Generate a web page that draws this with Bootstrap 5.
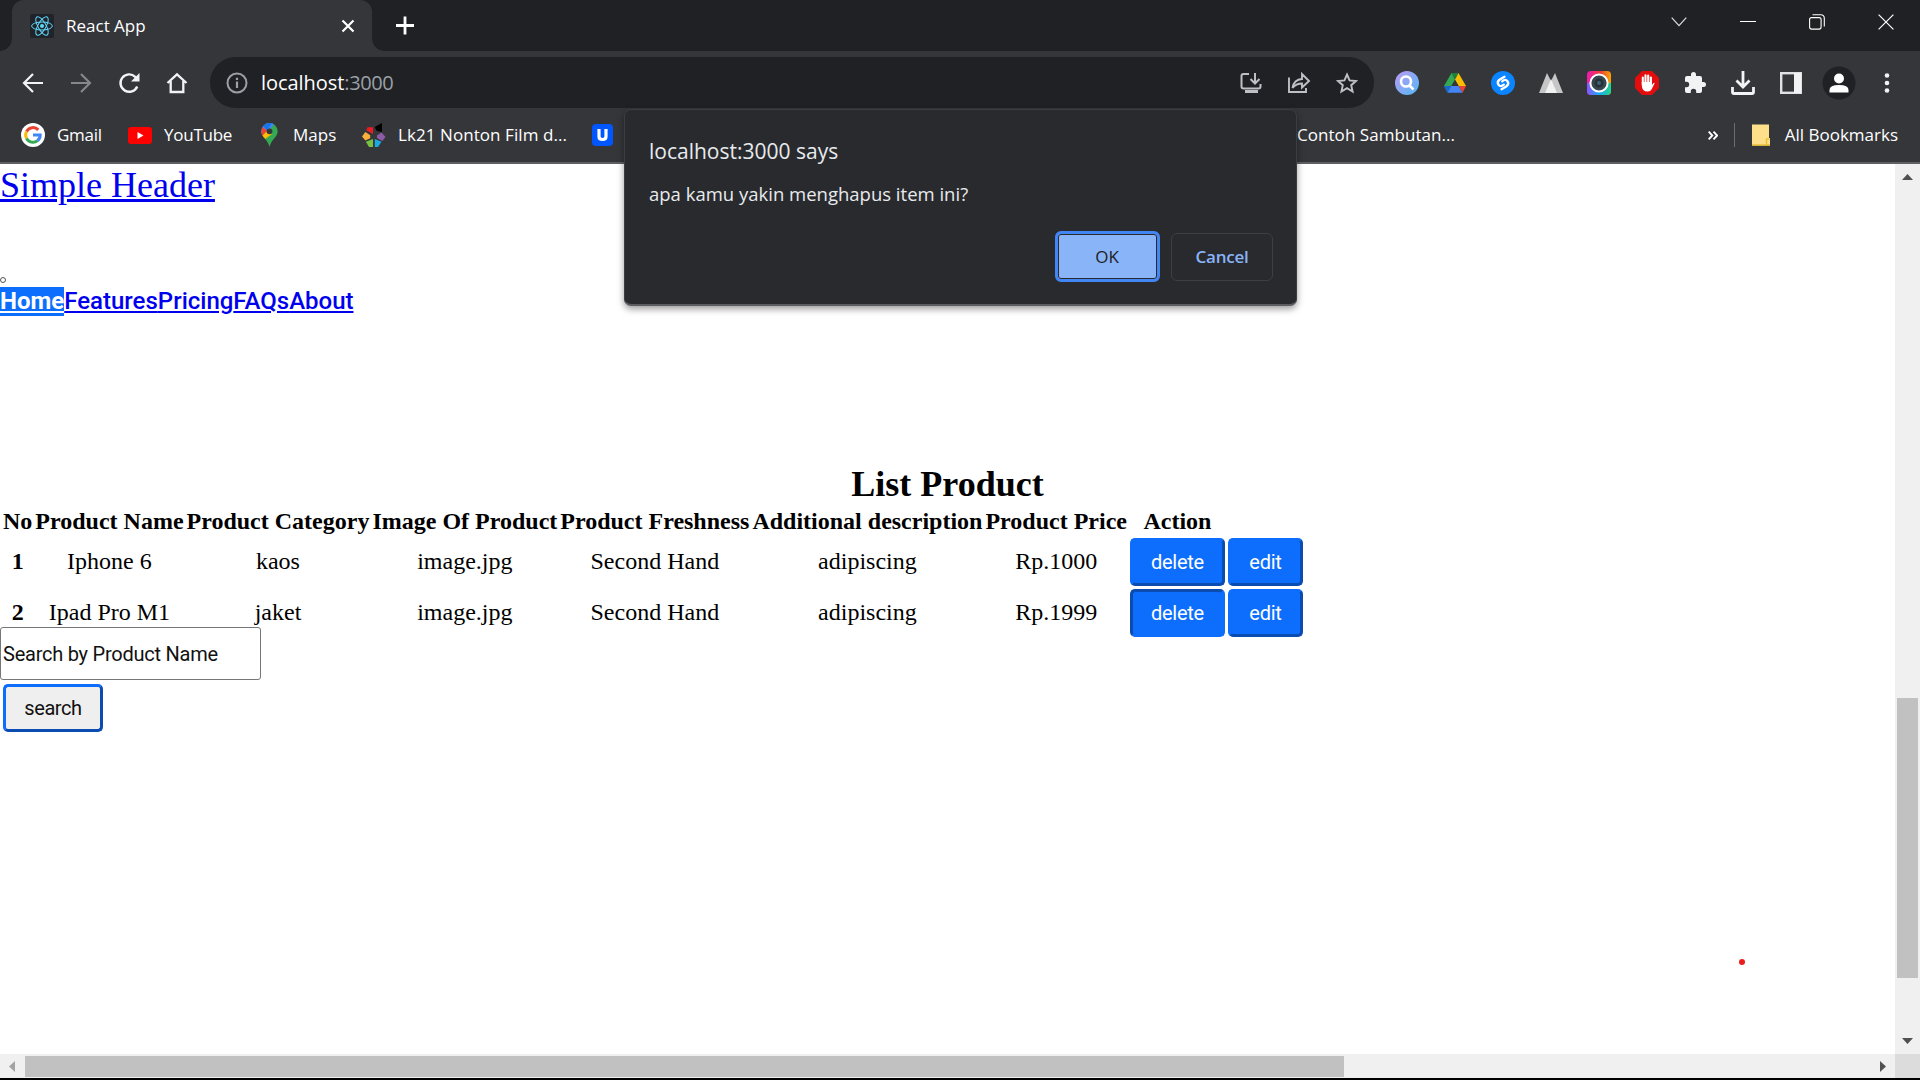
<!DOCTYPE html>
<html lang="id">
<head>
<meta charset="utf-8">
<title>React App</title>
<link href="https://cdn.jsdelivr.net/npm/bootstrap@5.3.0/dist/css/bootstrap.min.css" rel="stylesheet">
<style>
body{width:1920px;height:1080px;overflow:hidden;background:#fff;color:#000;font-family:"Open Sans","Noto Sans",sans-serif}
svg{display:block;flex:none}
.tabstrip{height:51px;background:#202124;padding-left:12px}
.tab-active{width:360px;background:#35363a;border-radius:12px 12px 0 0;position:relative;color:#fff;padding:0 17px 0 18px}
.tab-active::before,.tab-active::after{content:"";position:absolute;bottom:0;width:12px;height:12px}
.tab-active::before{left:-12px;background:radial-gradient(circle at 0 0,transparent 11.5px,#35363a 12px)}
.tab-active::after{right:-12px;background:radial-gradient(circle at 100% 0,transparent 11.5px,#35363a 12px)}
.ui{font-size:17px;line-height:24px;white-space:nowrap}
.wincell{width:69px;height:43px}
.toolbar{height:63px;background:#35363a;padding-left:9px}
.cell{width:48px;flex:none}
.omni{width:1164px;height:51px;background:#202124;border-radius:26px;margin-left:9px;padding:0 3px 0 16px;color:#fff}
.addr{font-size:20px;margin-left:13px;letter-spacing:-.05px}
.port{color:#9aa0a6;letter-spacing:-.4px}
.extensions{margin-left:9px}
.bookmarks{height:50px;background:#35363a;border-bottom:2px solid #5f6063;color:#fff;padding-left:21px;padding-bottom:6px}
.tight{letter-spacing:-.25px}
.bm-gmail{width:71px;margin-left:12px}
.bm-youtube{width:97px;margin-left:12px}
.bm-maps{width:69px;margin-left:15px}
.bm-film{width:194px;margin-left:12px;letter-spacing:.07px}
.bm-speech{margin-left:684px;letter-spacing:.05px}
.bm-sep{width:1px;height:24px;background:#6b6c6f;margin:0 17px 0 16px}
.bm-all{margin-left:15px}
.bm-right{margin-right:22px}
.viewport{width:1895px;height:890px;position:relative;overflow:hidden;font-family:"Liberation Serif",serif}
.lnk{color:#0000ee;text-decoration:underline;display:inline-block}
.brandline{font-size:36px;line-height:41px;padding-top:1px;height:110px}
.bullet{width:6px;height:6px;border:1px solid #555;border-radius:50%;margin-top:3px}
.navline{font-family:Roboto,sans-serif;font-size:24px;font-weight:500;line-height:29px;height:176px;margin-top:4px}
.navline .current{background:#0d6efd;color:#fff;font-weight:700}
.ttl{font-size:36px;line-height:42px;font-weight:700;margin:0}
.products{border-collapse:separate;border-spacing:3px;font-size:24px;line-height:27px;text-align:center}
.products td,.products th{padding:0;white-space:nowrap}
.products thead th{height:27px}
.products tbody th,.products tbody td:not(.btncell){padding-bottom:2px}
.act{font-family:Roboto,sans-serif;font-size:20px;line-height:24px;height:48px;border-radius:5px;border:3px solid;border-color:#0d6efd #0a4cb0 #0a4cb0 #0d6efd;background:#0d6efd;color:#fff;padding:0;display:block;letter-spacing:-.27px}
.act.pressed{border-color:#0a4cb0 #0d6efd #0d6efd #0a4cb0}
.w-del{width:95px}.w-edit{width:75px}
.searchbox{margin-top:-13px}
.srch{width:261px;height:53px;border:1px solid #767676;border-radius:3px;font-family:Roboto,sans-serif;font-size:20px;letter-spacing:-.24px;padding:0 0 0 2px;color:#111;display:block;position:relative;background:#fff}
.srch::placeholder{color:#111;opacity:1}
.act.plain{background:#efefef;color:#111;width:100px;margin:4px 0 0 3px;letter-spacing:-.4px}
.vbar{width:25px;height:890px;background:#f0f0f0;padding:10px 0}
.vthumb{width:21px;height:280px;background:#c1c1c1;margin:518px 2px 60px}
.hbar{height:24px;background:#f0f0f0;padding-left:9px}
.hthumb{width:1319px;height:21px;background:#c1c1c1;margin-left:10px}
.corner{width:25px;height:24px;background:#dcdcdc;margin-left:9px}
.base{height:2px;background:#000}
.dialogbox{position:absolute;left:624px;top:109px;width:673px;height:197px;background:#292a2d;border:1px solid #3c3d40;border-bottom:2px solid #5c5d60;border-radius:7px;box-shadow:0 3px 7px rgba(0,0,0,.4);color:#e8eaed;padding:29px 23px 22px 24px}
.dlg-title{font-size:21px}
.dlg-text{font-size:18.5px;margin-top:19px}
.dlg-actions{gap:11px}
.dlgbtn{font-size:17px;font-weight:600;border-radius:6px}
.ok{width:105px;height:51px;border:3px solid #4285f4;background:#8ab4f8;box-shadow:inset 0 0 0 1px #292a2d;color:#202124;font-weight:500;padding-right:1px}
.cancel{width:102px;height:48px;border:1px solid #3c4043;color:#8ab4f8}
.dot{position:absolute;left:1738.5px;top:794.5px;width:6px;height:6px;border-radius:50%;background:#ea1c1c}
</style>
<script src="https://cdn.jsdelivr.net/npm/bootstrap@5.3.0/dist/js/bootstrap.bundle.min.js"></script>
</head>
<body>
<div class="tabstrip d-flex">
  <div class="tab-active d-flex align-items-center">
    <svg width="24" height="24" viewBox="0 0 24 24"><rect width="24" height="24" rx="2" fill="#20232a"/><g fill="none" stroke="#61dafb" stroke-width="1"><ellipse cx="12" cy="12" rx="10.4" ry="4"/><ellipse cx="12" cy="12" rx="10.4" ry="4" transform="rotate(60 12 12)"/><ellipse cx="12" cy="12" rx="10.4" ry="4" transform="rotate(120 12 12)"/></g><circle cx="12" cy="12" r="2" fill="#61dafb"/></svg>
    <span class="ui ms-2 ps-1 flex-grow-1">React App</span>
    <svg width="14" height="14" viewBox="0 0 14 14"><path d="M1.5 1.5l11 11M12.500 1.500l-11 11" stroke="#fff" stroke-width="2.200"/></svg>
  </div>
  <svg class="ms-4 mt-3" width="18" height="19" viewBox="0 0 18 19"><path d="M9 .5v18M0 9.500h18" stroke="#fff" stroke-width="2.800"/></svg>
  <div class="d-flex ms-auto">
    <div class="wincell d-flex align-items-center justify-content-center"><svg width="16" height="10" viewBox="0 0 16 10"><path d="M.7.700L8 8.700 15.300.700" fill="none" stroke="#ddd" stroke-width="1.200"/></svg></div>
    <div class="wincell d-flex align-items-center justify-content-center"><svg width="16" height="1" viewBox="0 0 16 1"><path d="M0 .5h16" stroke="#fff" stroke-width="1"/></svg></div>
    <div class="wincell d-flex align-items-center justify-content-center"><svg width="16" height="16" viewBox="0 0 16 16" fill="none" stroke="#fff" stroke-width="1.100"><rect x=".6" y="3.600" width="11.500" height="11.500" rx="2"/><path d="M3.500.700H12A3.300 3.300 0 0 1 15.300 4v8.500"/></svg></div>
    <div class="wincell d-flex align-items-center justify-content-center"><svg width="16" height="16" viewBox="0 0 16 16"><path d="M.6.600l14.800 14.800M15.400.600L.6 15.400" stroke="#fff" stroke-width="1.200"/></svg></div>
  </div>
</div>
<div class="toolbar d-flex align-items-center">
  <div class="cell d-flex justify-content-center"><svg width="22" height="22" viewBox="0 0 22 22" fill="none" stroke="#f1f3f4" stroke-width="2.200"><path d="M21 11H2.500M11 2L2 11l9 9"/></svg></div>
  <div class="cell d-flex justify-content-center"><svg width="22" height="22" viewBox="0 0 22 22" fill="none" stroke="#85878a" stroke-width="2.200"><path d="M1 11h18.500M11 2l9 9-9 9"/></svg></div>
  <div class="cell d-flex justify-content-center"><svg width="22" height="22" viewBox="0 0 22 22"><path d="M19.200 14.500A8.700 8.700 0 1 1 17.200 4.800L19.500 7" fill="none" stroke="#f1f3f4" stroke-width="2.400"/><path d="M21.500 1v8.500H13z" fill="#f1f3f4"/></svg></div>
  <div class="cell d-flex justify-content-center"><svg width="22" height="22" viewBox="0 0 22 22" fill="none" stroke="#f1f3f4" stroke-width="2.300"><path d="M1.500 11L11 2.300 20.500 11M4.700 9v11h12.600V9"/></svg></div>
  <div class="omni d-flex align-items-center">
    <svg width="22" height="22" viewBox="0 0 22 22"><circle cx="11" cy="11" r="9.500" fill="none" stroke="#9aa0a6" stroke-width="2"/><path d="M11 9.500V16M11 5.800V8" stroke="#9aa0a6" stroke-width="2.200"/></svg>
    <span class="addr flex-grow-1">localhost<span class="port">:3000</span></span>
    <div class="cell d-flex justify-content-center"><svg width="22" height="22" viewBox="0 0 22 22"><path d="M9 2H3.500Q1.500 2 1.500 4v10.500q0 2 2 2h15q2 0 2-2V12M15 1v9.500M10.500 7l4.500 4.500L19.500 7" fill="none" stroke="#bdc1c6" stroke-width="2"/><path d="M5 18h13v3H5z" fill="#bdc1c6"/></svg></div>
    <div class="cell d-flex justify-content-center"><svg width="24" height="22" viewBox="0 0 24 22" fill="none" stroke="#bdc1c6" stroke-width="1.900"><path d="M2 5.500V20h17v-4M5.500 16C6.500 10 10 7.300 15 7V2l7 7-7 6.500V11.500C11 11.500 8 12.800 5.500 16z"/></svg></div>
    <div class="cell d-flex justify-content-center"><svg width="22" height="22" viewBox="0 0 22 22"><path d="M11 2.500l2.600 5.900 6.400.6-4.800 4.200 1.400 6.300L11 16.200l-5.600 3.300 1.400-6.300L2 9l6.400-.6z" fill="none" stroke="#bdc1c6" stroke-width="1.900"/></svg></div>
  </div>
  <div class="extensions d-flex align-items-center">
    <div class="cell d-flex justify-content-center"><svg width="24" height="24" viewBox="0 0 24 24"><defs><linearGradient id="lens" x1="0" y1="0" x2="1" y2="1"><stop offset=".1" stop-color="#b39df5"/><stop offset="1" stop-color="#4fb8f5"/></linearGradient></defs><circle cx="12" cy="12" r="12" fill="url(#lens)"/><circle cx="11" cy="10.500" r="5" fill="none" stroke="#fff" stroke-width="2.600"/><path d="M14.500 14.500l4 4" stroke="#fff" stroke-width="2.600"/></svg></div>
    <div class="cell d-flex justify-content-center"><svg width="22" height="20" viewBox="0 0 22 20"><path d="M7.500 0h7L11 6.200z" fill="#188038"/><path d="M7.500 0L0 13l3.500 6.500L11 6.500z" fill="#34a853"/><path d="M14.500 0L22 13h-7.200L11 6.500z" fill="#fbbc04"/><path d="M0 13h7.300l-3.800 6.700z" fill="#1967d2"/><path d="M7.300 13h7.500l3.700 6.700h-15z" fill="#4285f4"/><path d="M14.800 13H22l-3.500 6.700z" fill="#ea4335"/><path d="M11 7.500l3.300 5.500H7.700z" fill="#35363a"/></svg></div>
    <div class="cell d-flex justify-content-center"><svg width="24" height="24" viewBox="0 0 24 24"><circle cx="12" cy="12" r="12" fill="#0a84ff"/><path d="M13.500 5.800L8.800 8.500Q5.500 11 7.500 13.700T12.800 13.600M10.500 18.200l4.700-2.700Q18.500 13 16.500 10.300T11.200 10.400" fill="none" stroke="#fff" stroke-width="2.300" stroke-linecap="round"/></svg></div>
    <div class="cell d-flex justify-content-center"><svg width="24" height="20" viewBox="0 0 24 20"><path d="M0 20L8 0l4 8 4-8 8 20z" fill="#c6c6c6"/><path d="M6 20l6-14 6 14z" fill="#f1f1f1"/></svg></div>
    <div class="cell d-flex justify-content-center"><svg width="24" height="24" viewBox="0 0 24 24"><defs><linearGradient id="cam" x1="0" y1="0" x2="1" y2="0"><stop stop-color="#ec1bb5"/><stop offset=".55" stop-color="#f13b38"/><stop offset="1" stop-color="#f9a602"/></linearGradient><linearGradient id="cam2" x1="0" y1="0" x2="1" y2="0"><stop stop-color="#8c54ff"/><stop offset=".5" stop-color="#19a8f5"/><stop offset="1" stop-color="#21d789"/></linearGradient></defs><rect width="24" height="24" rx="4" fill="url(#cam)"/><path d="M0 12h24v8a4 4 0 0 1-4 4H4a4 4 0 0 1-4-4z" fill="url(#cam2)"/><circle cx="12" cy="12" r="8.600" fill="#37474f" stroke="#fff" stroke-width="2"/><circle cx="12" cy="12" r="4.500" fill="#263238"/><circle cx="12" cy="12" r="2" fill="#3d6478"/></svg></div>
    <div class="cell d-flex justify-content-center"><svg width="24" height="24" viewBox="0 0 24 24"><path d="M7 0h10l7 7v10l-7 7H7l-7-7V7z" fill="#e40d0d"/><path d="M7.800 13V6.500M10.500 12V4.200M13.200 12V4.500M15.900 13V6.500" stroke="#fff" stroke-width="2.100" stroke-linecap="round"/><path d="M6.800 11h10.100v3l1.600-2q1.200-.5 1 .6L16.800 18q-1.300 2.500-4 2.500-6 0-6-6z" fill="#fff"/></svg></div>
    <div class="cell d-flex justify-content-center"><svg width="24" height="24" viewBox="0 0 24 24"><path d="M20.500 11H19V7a2 2 0 0 0-2-2h-4V3.500a2.500 2.500 0 0 0-5 0V5H4a2 2 0 0 0-2 2v3.800h1.500a2.700 2.700 0 0 1 0 5.400H2V20a2 2 0 0 0 2 2h3.800v-1.500a2.700 2.700 0 0 1 5.400 0V22H17a2 2 0 0 0 2-2v-4h1.500a2.500 2.500 0 0 0 0-5z" fill="#f1f3f4"/></svg></div>
    <div class="cell d-flex justify-content-center"><svg width="24" height="24" viewBox="0 0 24 24"><path d="M12 0v15M5.500 9.500L12 16l6.500-6.500M1.500 16v5q0 1.500 1.500 1.500h18q1.500 0 1.500-1.500v-5" fill="none" stroke="#f1f3f4" stroke-width="2.800"/></svg></div>
    <div class="cell d-flex justify-content-center"><svg width="22" height="22" viewBox="0 0 22 22"><rect x="1.200" y="1.200" width="19.600" height="19.600" fill="none" stroke="#dfe1e3" stroke-width="2.400"/><path d="M14 1h7v20h-7z" fill="#f1f3f4"/></svg></div>
    <div class="cell d-flex justify-content-center"><svg width="34" height="34" viewBox="0 0 34 34"><circle cx="17" cy="17" r="16.500" fill="#202124"/><circle cx="17" cy="12.500" r="5" fill="#fff"/><path d="M7.500 26.500V24q0-5 9.500-5t9.500 5v2.500z" fill="#fff"/></svg></div>
    <div class="cell d-flex justify-content-center"><svg width="6" height="20" viewBox="0 0 6 20" fill="#f1f3f4"><circle cx="3" cy="2.500" r="2.300"/><circle cx="3" cy="10" r="2.300"/><circle cx="3" cy="17.500" r="2.300"/></svg></div>
  </div>
</div>
<div class="bookmarks d-flex align-items-center ui">
  <svg width="24" height="24" viewBox="0 0 24 24"><circle cx="12" cy="12" r="12" fill="#fff"/><g fill="none" stroke-width="3"><path d="M17.300 6.900A7.300 7.300 0 0 0 5.500 8.600" stroke="#ea4335"/><path d="M5.500 8.600a7.300 7.300 0 0 0 0 6.800" stroke="#fbbc04"/><path d="M5.500 15.400a7.300 7.300 0 0 0 11 2.300" stroke="#34a853"/><path d="M16.500 17.700Q19.300 15.500 19.200 12H12" stroke="#4285f4"/></g></svg>
  <span class="bm-gmail tight">Gmail</span>
  <svg width="24" height="17" viewBox="0 0 24 17"><rect width="24" height="17" rx="3" fill="#f00"/><path d="M9.500 5v7l6-3.500z" fill="#fff"/></svg>
  <span class="bm-youtube tight">YouTube</span>
  <svg width="17" height="24" viewBox="0 0 17 24"><defs><clipPath id="pin"><path d="M8.500 0A8.200 8.200 0 0 1 16.700 8.200C16.700 14 10.500 16 8.500 24 6.500 16 .3 14 .3 8.200A8.200 8.200 0 0 1 8.500 0z"/></clipPath></defs><g clip-path="url(#pin)"><path d="M0 0h17v24H0z" fill="#34a853"/><path d="M0 16L17-3V-5H0z" fill="#4285f4"/><path d="M0 3l8 6-8 9z" fill="#ea4335"/><path d="M0 19V14L6 8l5 3z" fill="#fbbc04"/><path d="M2 3l4 4 5-7H4z" fill="#1a73e8"/></g><circle cx="8.500" cy="8.300" r="2.900" fill="#35363a"/></svg>
  <span class="bm-maps">Maps</span>
  <svg width="24" height="24" viewBox="0 0 24 24"><path d="M12.800 4L20 0v9l-5.500-1.200z" fill="#000"/><path d="M5.500 4.300H11v6.700L4.300 7.300z" fill="#ed1c24"/><path d="M3.400 9l4.800 3.200v3L3.400 17.500 0 13.500z" fill="#fbb03b"/><path d="M3.800 18.800L11 16v8H7z" fill="#7ac143"/><path d="M12.800 16l6.700 2.800L16 24h-3.200z" fill="#1ba9e1"/><path d="M19.500 9.500L23.500 14l-3.200 4-5.300-3v-2.500z" fill="#8e5ba6"/></svg>
  <span class="bm-film">Lk21 Nonton Film d...</span>
  <svg width="21" height="22" viewBox="0 0 21 22"><rect width="21" height="22" rx="4" fill="#0057ff"/><path d="M7 5v7.500q0 3 3.500 3t3.500-3V5" fill="none" stroke="#fff" stroke-width="3.200"/></svg>
  <span class="bm-speech">Contoh Sambutan...</span>
  <span class="bm-right d-flex align-items-center ms-auto">
    <svg width="10" height="9" viewBox="0 0 10 9"><path d="M.7.700l3.600 3.800L.7 8.300M5.500.700l3.600 3.800-3.600 3.800" fill="none" stroke="#fff" stroke-width="1.900"/></svg>
    <span class="bm-sep"></span>
    <svg width="18" height="22" viewBox="0 0 18 22"><path d="M0 .5h17V14h1v7.500H0z" fill="#ffe08a"/><path d="M0 21h18M14.500 21v-6h3" fill="none" stroke="#e9be3a" stroke-width="1.500"/></svg>
    <span class="bm-all">All Bookmarks</span>
  </span>
</div>
<div class="d-flex">
  <main class="viewport">
    <div class="brandline"><a class="lnk">Simple Header</a></div>
    <div class="bullet"></div>
    <nav class="navline d-flex align-items-start"><a class="lnk current">Home</a><a class="lnk">Features</a><a class="lnk">Pricing</a><a class="lnk">FAQs</a><a class="lnk">About</a></nav>
    <h2 class="ttl text-center">List Product</h2>
    <table class="products">
      <thead><tr><th>No</th><th>Product Name</th><th>Product Category</th><th>Image Of Product</th><th>Product Freshness</th><th>Additional description</th><th>Product Price</th><th>Action</th><th></th></tr></thead>
      <tbody>
        <tr><th>1</th><td>Iphone 6</td><td>kaos</td><td>image.jpg</td><td>Second Hand</td><td>adipiscing</td><td>Rp.1000</td><td class="btncell"><button class="act w-del">delete</button></td><td class="btncell"><button class="act w-edit">edit</button></td></tr>
        <tr><th>2</th><td>Ipad Pro M1</td><td>jaket</td><td>image.jpg</td><td>Second Hand</td><td>adipiscing</td><td>Rp.1999</td><td class="btncell"><button class="act w-del pressed">delete</button></td><td class="btncell"><button class="act w-edit">edit</button></td></tr>
      </tbody>
    </table>
    <div class="searchbox">
      <input class="srch" placeholder="Search by Product Name">
      <button class="act plain">search</button>
    </div>
    <div class="dot"></div>
  </main>
  <div class="vbar d-flex flex-column align-items-center">
    <svg width="11" height="6" viewBox="0 0 11 6"><path d="M0 6L5.500 0 11 6z" fill="#505050"/></svg>
    <div class="vthumb"></div>
    <svg width="11" height="6" viewBox="0 0 11 6"><path d="M0 0h11L5.500 6z" fill="#505050"/></svg>
  </div>
</div>
<div class="hbar d-flex align-items-center">
  <svg width="6" height="11" viewBox="0 0 6 11"><path d="M6 0v11L0 5.500z" fill="#a3a3a3"/></svg>
  <div class="hthumb"></div>
  <svg class="ms-auto" width="6" height="11" viewBox="0 0 6 11"><path d="M0 0v11l6-5.500z" fill="#505050"/></svg>
  <div class="corner"></div>
</div>
<div class="base"></div>
<div class="dialogbox d-flex flex-column">
  <div class="ui dlg-title">localhost:3000 says</div>
  <div class="ui dlg-text">apa kamu yakin menghapus item ini?</div>
  <div class="dlg-actions d-flex justify-content-end align-items-center mt-auto">
    <div class="dlgbtn ok d-flex align-items-center justify-content-center">OK</div>
    <div class="dlgbtn cancel tight d-flex align-items-center justify-content-center">Cancel</div>
  </div>
</div>
</body>
</html>
